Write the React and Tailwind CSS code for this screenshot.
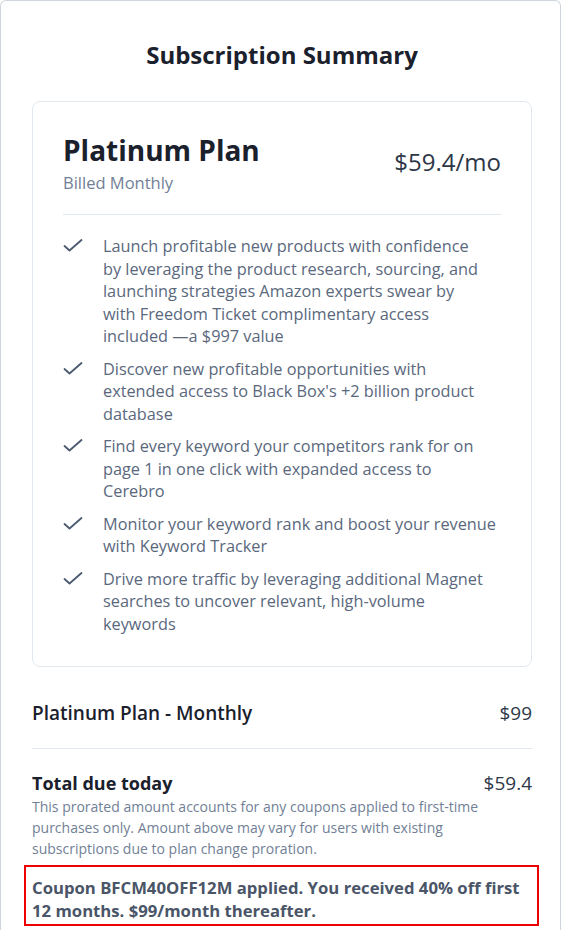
import React from "react";

const features = [
  [
    "Launch profitable new products with confidence",
    "by leveraging the product research, sourcing, and",
    "launching strategies Amazon experts swear by",
    "with Freedom Ticket complimentary access",
    "included —a $997 value",
  ],
  [
    "Discover new profitable opportunities with",
    "extended access to Black Box's +2 billion product",
    "database",
  ],
  [
    "Find every keyword your competitors rank for on",
    "page 1 in one click with expanded access to",
    "Cerebro",
  ],
  ["Monitor your keyword rank and boost your revenue", "with Keyword Tracker"],
  [
    "Drive more traffic by leveraging additional Magnet",
    "searches to uncover relevant, high-volume",
    "keywords",
  ],
];

function Check() {
  return (
    <svg width="20" height="20" viewBox="0 0 20 20" fill="none" className="shrink-0 mt-[1px]">
      <path d="M1.5 10 L6.5 14.5 L18.5 4" stroke="#4a5a70" strokeWidth="1.8" strokeLinecap="round" strokeLinejoin="round" />
    </svg>
  );
}

export default function App() {
  return (
    <div className="w-[562px] h-[930px] overflow-hidden bg-white" style={{ fontFamily: '"Open Sans", "Noto Sans", sans-serif' }}>
      <div className="h-[960px] mr-[1px] border border-b-0 border-[#cfd6df] rounded-t-[6px] pl-[31px] pr-[28px] pt-[38px]">
        <h2 className="text-center text-[24px] font-bold text-[#1a202c] leading-[32px]">Subscription Summary</h2>
        <div className="mt-[30px] border border-[#e2e8f0] rounded-[8px] px-[30px] pt-[31px] pb-[31px]">
          <div className="flex justify-between items-start">
            <div>
              <div className="text-[28px] font-bold text-[#1a202c] leading-[34px]">Platinum Plan</div>
              <div className="text-[16.5px] text-[#718096] leading-[22px] mt-[5px]">Billed Monthly</div>
            </div>
            <div className="text-[24px] text-[#2d3748] mt-[14px] leading-[30px]">$59.4/mo</div>
          </div>
          <div className="border-t border-[#e2e8f0] mt-[20px] mb-[20px]" />
          <ul className="flex flex-col gap-[10px]">
            {features.map((lines, i) => (
              <li key={i} className="flex gap-[20px]">
                <Check />
                <span className="text-[16.3px] leading-[22.5px] text-[#5a687d] whitespace-nowrap">
                  {lines.map((l, j) => (
                    <span key={j} className="block">{l}</span>
                  ))}
                </span>
              </li>
            ))}
          </ul>
        </div>
        <div className="flex justify-between items-center mt-[33px] leading-[26px]">
          <span className="font-semibold text-[19px] text-[#1a202c]">Platinum Plan - Monthly</span>
          <span className="text-[19px] text-[#2d3748]">$99</span>
        </div>
        <div className="border-t border-[#e2e8f0] mt-[22px]" />
        <div className="flex justify-between items-center mt-[21px] leading-[26px]">
          <span className="font-bold text-[18px] text-[#1a202c]">Total due today</span>
          <span className="text-[19px] text-[#2d3748]">$59.4</span>
        </div>
        <p className="text-[14px] leading-[21px] text-[#718096]">
          <span className="block">This prorated amount accounts for any coupons applied to first-time</span>
          <span className="block">purchases only. Amount above may vary for users with existing</span>
          <span className="block">subscriptions due to plan change proration.</span>
        </p>
        <div className="-ml-[8px] -mr-[7px] mt-[6px] border-2 border-[#ee0000] px-[6px] pt-[9px] pb-[2px]">
          <p className="text-[16.7px] leading-[23px] font-bold text-[#4a5568] whitespace-nowrap">
            <span className="block">Coupon BFCM40OFF12M applied. You received 40% off first</span>
            <span className="block">12 months. $99/month thereafter.</span>
          </p>
        </div>
      </div>
    </div>
  );
}
